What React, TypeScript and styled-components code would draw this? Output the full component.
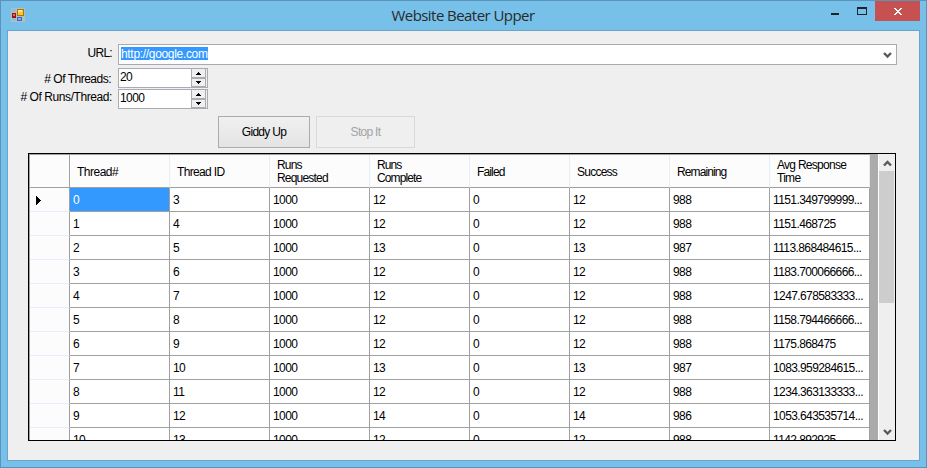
import React from "react";
import styled, { createGlobalStyle } from "styled-components";

const GlobalStyle = createGlobalStyle`
  * { box-sizing: border-box; }
  body { margin: 0; overflow: hidden; }
`;

const Window = styled.div`
  width: 927px;
  height: 468px;
  display: flex;
  flex-direction: column;
  padding: 0 6px 6px;
  background: #76c0e9;
  border: 1px solid #5a94b8;
  font: 12px/13px "Liberation Sans", Arial, sans-serif;
  letter-spacing: -0.6px;
  color: #000;
  white-space: nowrap;
`;

const TitleBar = styled.header`
  display: grid;
  grid-template-columns: 128px 1fr 128px;
  height: 29px;
  flex: none;
`;

const AppIcon = styled.svg`
  margin: 7px 0 0 4px;
`;

const Title = styled.h1`
  margin: 0;
  text-align: center;
  font: 15px/29px "Open Sans", "Noto Sans", sans-serif;
  letter-spacing: -0.56px;
  padding-right: 1px;
  color: #2a2a2a;
`;

const WindowButtons = styled.svg`
  justify-self: end;
  margin-right: -1px;
`;

const Client = styled.main`
  flex: 1;
  min-height: 0;
  display: flex;
  flex-direction: column;
  padding: 13px 22px 0 14px;
  background: #efefef;
  border: 1px solid #67a5c9;
`;

const Form = styled.div`
  display: grid;
  grid-template-columns: 90px 1fr;
  grid-template-rows: 21px 20px 20px;
  column-gap: 6px;
  row-gap: 3px;
  height: 72px;
  flex: none;
`;

const Label = styled.label<{ $top: number; $right?: number; $spacing: number }>`
  justify-self: end;
  padding-top: ${(p) => p.$top}px;
  padding-right: ${(p) => p.$right ?? 0}px;
  letter-spacing: ${(p) => p.$spacing}px;
`;

const ComboBox = styled.div`
  display: flex;
  justify-content: space-between;
  background: #fff;
  border: 1px solid #a9abb3;
  padding: 2px 4px 0 2px;
`;

const SelectedText = styled.span`
  height: 13px;
  width: 87px;
  line-height: 14px;
  background: #3399ff;
  color: #fff;
  letter-spacing: -0.32px;
`;

const Spinner = styled.div<{ $shift?: number }>`
  width: 90px;
  height: 20px;
  margin-top: ${(p) => p.$shift ?? 0}px;
  display: flex;
  justify-content: space-between;
  background: #fff;
  border: 1px solid #a9abb3;
  padding-left: 1px;
  line-height: 17px;
`;

const Actions = styled.div`
  display: flex;
  gap: 6px;
  padding-left: 196px;
  height: 37px;
  flex: none;
`;

const Button = styled.button<{ $width: number }>`
  width: ${(p) => p.$width}px;
  height: 32px;
  padding: 0;
  font: inherit;
  letter-spacing: -0.7px;
  color: #000;
  background: linear-gradient(#f0f0f0, #e4e4e4);
  border: 1px solid #acacac;
  &:disabled {
    color: #a3a3a3;
    background: #efefef;
    border-color: #d9d9d9;
  }
`;

const GridFrame = styled.div`
  width: 868px;
  height: 288px;
  margin-left: 6px;
  display: flex;
  overflow: hidden;
  background: #ababab;
  border: 1px solid #000;
`;

const Table = styled.div`
  width: 841px;
  flex: none;
  border-left: 1px solid #a0a0a0;
  border-top: 1px solid #a0a0a0;
`;

const Row = styled.div`
  display: grid;
  grid-template-columns: 40px repeat(8, 100px);
  height: 24px;
`;

const HeaderRow = styled(Row)`
  height: 33px;
`;

const HeaderCell = styled.div<{ $top?: number; $spacing?: number }>`
  display: flex;
  align-items: center;
  padding: ${(p) => p.$top ?? 1}px 0 0 7px;
  background: #fcfcfc;
  border-right: 1px solid #e5effa;
  border-bottom: 1px solid #a0a0a0;
  white-space: pre-line;
  letter-spacing: ${(p) => p.$spacing ?? 0}px;
  &:first-child { border-right-color: #a0a0a0; }
`;

const RowHeader = styled.div`
  display: flex;
  align-items: center;
  padding: 1px 0 0 6px;
  background: #fcfcfc;
  border-right: 1px solid #a0a0a0;
  border-bottom: 1px solid #e5effa;
`;

const Cell = styled.div<{ $selected?: boolean }>`
  padding-left: 3px;
  line-height: 25px;
  overflow: hidden;
  background: ${(p) => (p.$selected ? "#3399ff" : "#fff")};
  color: ${(p) => (p.$selected ? "#fff" : "#000")};
  border-right: 1px solid #a0a0a0;
  border-bottom: 1px solid #a0a0a0;
`;

const ScrollBar = styled.div`
  width: 17px;
  margin-left: auto;
  display: flex;
  flex-direction: column;
  align-items: center;
  padding-top: 1px;
  background: #efefef;
  border-left: 1px solid #fff;
`;

const Thumb = styled.div`
  width: 15px;
  height: 132px;
  margin-right: 1px;
  margin-bottom: auto;
  background: #cdcdcd;
`;

const headers: { text: string; spacing: number }[] = [
  { text: "Thread#", spacing: -0.5 },
  { text: "Thread ID", spacing: -0.65 },
  { text: "Runs\nRequested", spacing: -0.8 },
  { text: "Runs\nComplete", spacing: -0.9 },
  { text: "Failed", spacing: -0.85 },
  { text: "Success", spacing: -0.75 },
  { text: "Remaining", spacing: -0.9 },
  { text: "Avg Response\nTime", spacing: -0.72 },
];

const threads: [number, string][] = [
  [12, "1151.349799999..."],
  [12, "1151.468725"],
  [13, "1113.868484615..."],
  [12, "1183.700066666..."],
  [12, "1247.678583333..."],
  [12, "1158.794466666..."],
  [12, "1175.868475"],
  [13, "1083.959284615..."],
  [12, "1234.363133333..."],
  [14, "1053.643535714..."],
  [12, "1142.892925"],
];

function SpinArrows() {
  return (
    <svg width="16" height="18" shapeRendering="crispEdges">
      <path d="M0 0h16v18H0z" fill="#efefef" />
      <path d="M.5 0v17.5h14V0M0 8.5h15M0 9.5h15" fill="none" stroke="#acacac" />
      <path d="M7 3h1v1h1v1h1v1H5V5h1V4h1zM5 12h5v1H9v1H8v1H7v-1H6v-1H5z" fill="#000" />
    </svg>
  );
}

function Chevron({ up }: { up?: boolean }) {
  return (
    <svg width="9" height="16">
      <path d={up ? "M1 10.5 4.5 7 8 10.5" : "M1 6 4.5 9.5 8 6"} fill="none" stroke="#5a5a5a" strokeWidth="2.4" />
    </svg>
  );
}

export default function App() {
  return (
    <Window>
      <GlobalStyle />
      <TitleBar>
        <AppIcon width="14" height="14" shapeRendering="crispEdges">
          <path d="M0 0h14v14H0z" fill="#b9bcbf" />
          <path d="M1 1h4v3H1zM1 10h4v3H1z" fill="#91bdd9" />
          <path d="M6 1h7v7H6z" fill="#a87804" />
          <path d="M7 2h5v5H7z" fill="#fbc82f" />
          <path d="M7 2h4v2H7z" fill="#ffe58a" />
          <path d="M1 5h4v5H1z" fill="#9b1410" />
          <path d="M2 6h2v2H2z" fill="#ea6a53" />
          <path d="M6 9h5v4H6z" fill="#3568c8" />
          <path d="M7 10h3v2H7z" fill="#7fabef" />
        </AppIcon>
        <Title>Website Beater Upper</Title>
        <WindowButtons width="90" height="20" shapeRendering="crispEdges">
          <path d="M0 12h8v2H0z" fill="#222" />
          <path d="M26 6h10v8H26zM27 8v5h8V8z" fill="#222" fillRule="evenodd" />
          <path d="M44 0h45v20H44z" fill="#c75050" />
          <path d="M63 7h2v1h1v1h2V8h1V7h2v1h-1v1h-1v1h-1v1h1v1h1v1h1v1h-2v-1h-1v-1h-2v1h-1v1h-2v-1h1v-1h1v-1h1v-1h-1V9h-1V8h-1z" fill="#fff" />
        </WindowButtons>
      </TitleBar>
      <Client>
        <Form>
          <Label $top={3} $spacing={-0.7}>URL:</Label>
          <ComboBox>
            <SelectedText>http://google.com</SelectedText>
            <Chevron />
          </ComboBox>
          <Label $top={5} $right={1} $spacing={-0.5}># Of Threads:</Label>
          <Spinner>20<SpinArrows /></Spinner>
          <Label $top={0} $spacing={-0.42}># Of Runs/Thread:</Label>
          <Spinner $shift={-2}>1000<SpinArrows /></Spinner>
        </Form>
        <Actions>
          <Button $width={92}>Giddy Up</Button>
          <Button $width={99} disabled>Stop It</Button>
        </Actions>
        <GridFrame>
          <Table>
            <HeaderRow>
              <HeaderCell />
              {headers.map(({ text, spacing }) => (
                <HeaderCell key={text} $spacing={spacing} $top={text.includes("\n") ? 1 : 3}>{text}</HeaderCell>
              ))}
            </HeaderRow>
            {threads.map(([done, avg], i) => (
              <Row key={i}>
                <RowHeader>
                  {i === 0 && <svg width="5" height="9" shapeRendering="crispEdges"><path d="M0 0h1v1h1v1h1v1h1v1h1v1H4v1H3v1H2v1H1v1H0z" /></svg>}
                </RowHeader>
                <Cell $selected={i === 0}>{i}</Cell>
                <Cell>{i + 3}</Cell>
                <Cell>1000</Cell>
                <Cell>{done}</Cell>
                <Cell>0</Cell>
                <Cell>{done}</Cell>
                <Cell>{1000 - done}</Cell>
                <Cell>{avg}</Cell>
              </Row>
            ))}
          </Table>
          <ScrollBar>
            <Chevron up />
            <Thumb />
            <Chevron />
          </ScrollBar>
        </GridFrame>
      </Client>
    </Window>
  );
}
